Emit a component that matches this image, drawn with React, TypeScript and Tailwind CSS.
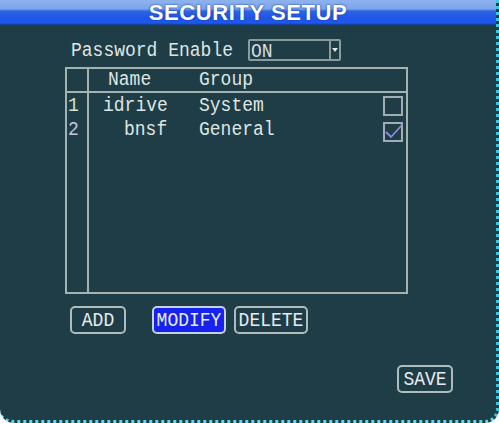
import React from "react";

const mono = { fontFamily: '"Liberation Mono", "DejaVu Sans Mono", monospace' };

function T({ children, className = "" }: { children: React.ReactNode; className?: string }) {
  return <span className={`inline-block scale-y-[1.15] ${className}`}>{children}</span>;
}

function Btn({ label, w, active }: { label: string; w: string; active?: boolean }) {
  return (
    <div
      className={`${w} h-[28px] flex items-center justify-center rounded-[5px] border-2 ${
        active ? "bg-[#1622ee] border-[#c8d0e8]" : "border-[#aebcbc]"
      } text-[18px] text-[#e8ecf0] leading-none`}
      style={mono}
    >
      <T>{label}</T>
    </div>
  );
}

function Check({ checked }: { checked?: boolean }) {
  return (
    <div className="w-[20px] h-[20px] border-2 border-[#a2acb4] relative">
      {checked && (
        <svg className="absolute left-0 top-0" width="18" height="16" viewBox="0 0 18 16">
          <path d="M1 8 L6 13 L17 1" stroke="#8a8ad8" strokeWidth="1.8" fill="none" />
        </svg>
      )}
    </div>
  );
}

export default function App() {
  return (
    <div
      className="w-[499px] h-[423px] bg-[#1f3d47] relative overflow-hidden rounded-b-[14px] border-r-[3px] border-b-[3px] border-dotted border-r-[#3cc8e0] border-b-[#5cd6ec] flex flex-col text-[#dfe6e2]"
      style={mono}
    >
      <div className="h-[25px] shrink-0 bg-[linear-gradient(to_bottom,#8eb2ee_0px,#7aa6ea_9px,#2f64e4_11px,#1f55e6_18px,#1d58ee_23px,#163e7a_25px)] flex items-center justify-center">
        <span
          className="text-[22px] font-bold text-white tracking-[0.6px] leading-none mt-[1px]"
          style={{
            fontFamily: '"Liberation Sans", Arial, sans-serif',
            textShadow: "0 0 2px #1a3fae, 0 0 1px #1a3fae",
          }}
        >
          SECURITY SETUP
        </span>
      </div>

      <div className="flex items-center ml-[71px] mt-[14px] h-[22px]">
        <T className="text-[18px] leading-none">Password Enable</T>
        <div className="ml-[15px] w-[93px] h-[22px] border-2 border-[#8c9c9c] rounded-[2px] flex">
          <span className="flex-1 text-[18px] leading-none pl-[1px] pt-[1px] text-[#d8dee0]">
            <T>ON</T>
          </span>
          <div className="w-[10px] border-l-2 border-[#8c9c9c] flex items-center justify-center">
            <svg width="6" height="4" viewBox="0 0 6 4">
              <path d="M0 0 H6 L3 4 Z" fill="#e0e6ea" />
            </svg>
          </div>
        </div>
      </div>

      <div className="ml-[65px] mt-[6px] w-[343px] h-[227px] border-2 border-[#a4b2b0] flex">
        <div className="w-[22px] border-r-2 border-[#a4b2b0] flex flex-col">
          <div className="h-[24px] border-b-2 border-[#a4b2b0]" />
          <div className="text-[18px] leading-none pt-[3px] pl-[1px] text-[#d4e4d4] h-[26px]">
            <T>1</T>
          </div>
          <div className="text-[18px] leading-none pt-[1px] pl-[1px] text-[#c8c4e0]">
            <T>2</T>
          </div>
        </div>
        <div className="flex-1 flex flex-col">
          <div className="h-[24px] border-b-2 border-[#a4b2b0] flex items-end pb-[3px] text-[18px] leading-none">
            <T className="ml-[19px] w-[91px]">Name</T>
            <T>Group</T>
          </div>
          <div className="h-[26px] flex items-start pt-[3px] text-[18px] leading-none relative">
            <T className="ml-[14px] w-[96px]">idrive</T>
            <T>System</T>
            <div className="absolute left-[294px] top-[3px]">
              <Check />
            </div>
          </div>
          <div className="h-[26px] flex items-start pt-[1px] text-[18px] leading-none relative">
            <T className="ml-[35px] w-[75px]">bnsf</T>
            <T>General</T>
            <div className="absolute left-[294px] top-[3px]">
              <Check checked />
            </div>
          </div>
        </div>
      </div>

      <div className="flex ml-[70px] mt-[12px]">
        <Btn label="ADD" w="w-[56px]" />
        <div className="ml-[26px]">
          <Btn label="MODIFY" w="w-[74px]" active />
        </div>
        <div className="ml-[8px]">
          <Btn label="DELETE" w="w-[74px]" />
        </div>
      </div>

      <div className="flex justify-end mr-[43px] mt-[31px]">
        <Btn label="SAVE" w="w-[56px]" />
      </div>
    </div>
  );
}
